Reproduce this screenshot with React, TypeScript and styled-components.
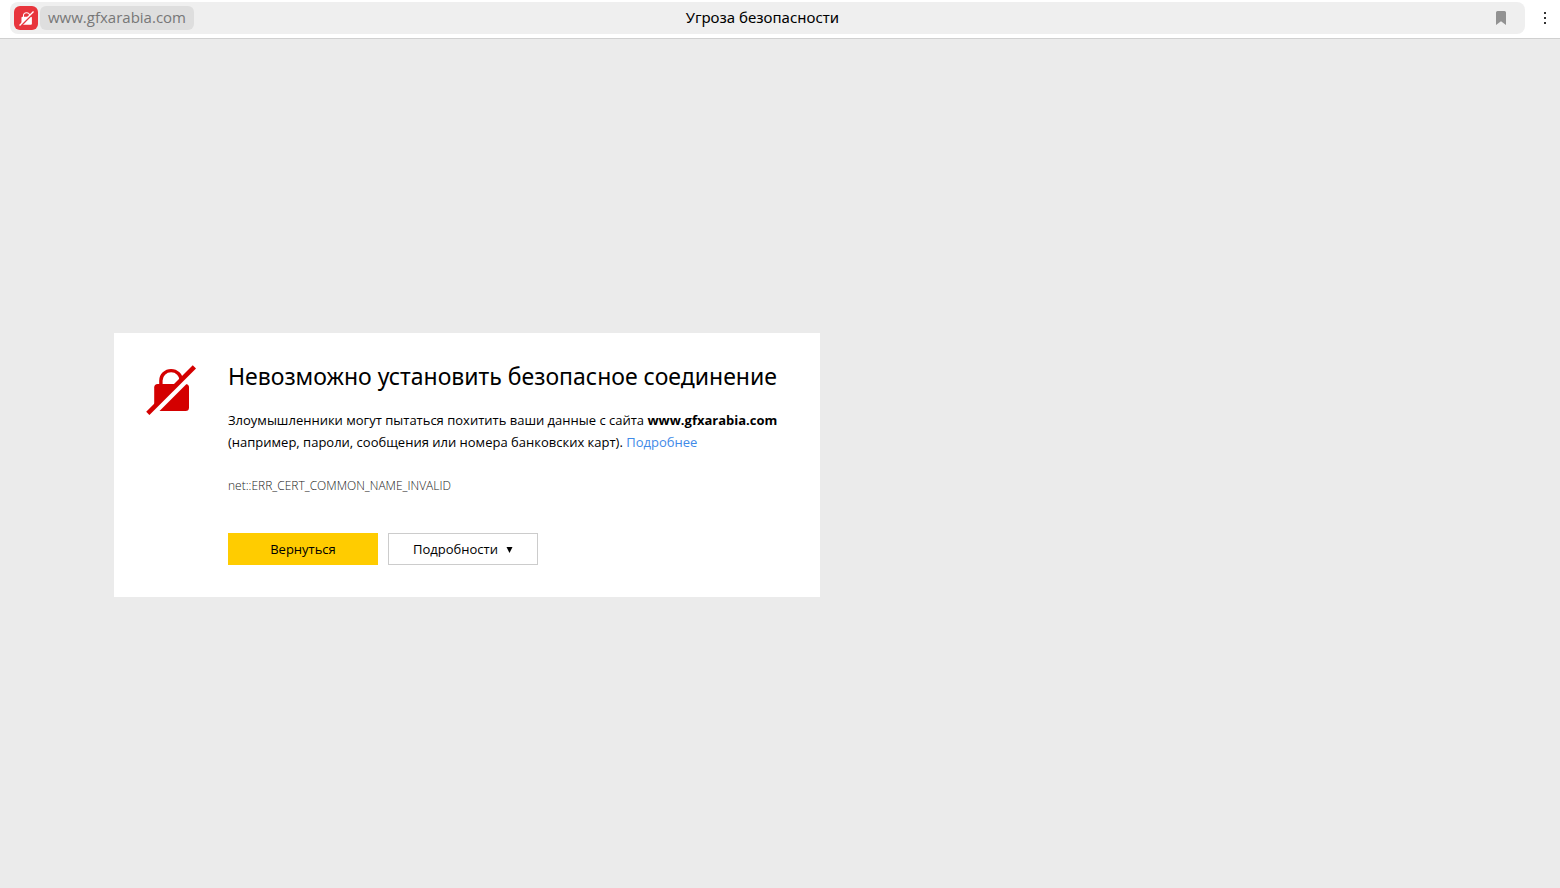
import React from "react";
import styled, { createGlobalStyle } from "styled-components";

const GlobalStyle = createGlobalStyle`
  * { box-sizing: border-box; }
  body {
    margin: 0;
    background: #ebebeb;
    color: #000;
    font-family: "Open Sans", "Noto Sans", sans-serif;
    font-size: 13px;
  }
  button { font: inherit; color: inherit; cursor: pointer; }
`;

const Page = styled.div`
  display: flex;
  flex-direction: column;
  min-height: 100vh;
`;

const Toolbar = styled.header`
  display: flex;
  height: 39px;
  padding: 2px 0 4px 10px;
  background: #fff;
  border-bottom: 1px solid #d0d0d0;
  font-size: 15px;
  line-height: 22px;
`;

const AddressBar = styled.div`
  flex: 1;
  display: grid;
  grid-template-columns: 1fr auto 1fr;
  align-items: center;
  height: 32px;
  padding: 0 14px 0 4px;
  background: #efefef;
  border-radius: 8px;
`;

const Site = styled.div`
  display: flex;
  align-items: center;
  gap: 2px;
`;

const IconButton = styled.button`
  display: flex;
  align-items: center;
  justify-content: center;
  padding: 0;
  border: 0;
  background: none;
`;

const SecurityButton = styled(IconButton)`
  width: 24px;
  height: 24px;
  border-radius: 6px;
  background: #e8353c;
  && { color: #fff; }
`;

const Host = styled.button`
  height: 24px;
  padding: 0 8px 2px;
  border: 0;
  border-radius: 6px;
  background: #dedede;
  && { color: #777; }
`;

const PageTitle = styled.div`
  padding-bottom: 2px;
  font-family: "Noto Sans", "Open Sans", sans-serif;
`;

const BookmarkButton = styled(IconButton)`
  justify-self: end;
  width: 20px;
  height: 24px;
`;

const MenuButton = styled(IconButton)`
  width: 35px;
  height: 32px;
  padding-left: 5px;
`;

const Main = styled.main`
  flex: 1;
  display: flex;
  align-items: center;
  padding: 3px 114px 0;
`;

const Card = styled.section`
  display: flex;
  align-items: flex-start;
  gap: 32px;
  width: 100%;
  max-width: 706px;
  padding: 32px;
  background: #fff;
`;

const LockBox = styled.div`
  flex: none;
  color: #d40000;
`;

const Content = styled.div`
  flex: 1;
`;

const Heading = styled.h1`
  margin: 0 0 22px;
  font-family: "Noto Sans", "Open Sans", sans-serif;
  font-size: 23px;
  font-weight: 400;
  line-height: 22px;
`;

const Text = styled.p`
  margin: 0;
  line-height: 22px;
`;

const MoreLink = styled.a`
  color: #3f8ae8;
  text-decoration: none;
`;

const ErrorCode = styled.p`
  margin: 22px 0 36px;
  color: #222;
  font-size: 12px;
  font-weight: 300;
  line-height: 22px;
`;

const Actions = styled.div`
  display: flex;
  gap: 10px;
`;

const ActionButton = styled.button<{ $primary?: boolean }>`
  display: flex;
  align-items: center;
  justify-content: center;
  gap: 8px;
  width: 150px;
  height: 32px;
  padding: 0;
  border: 1px solid ${(p) => (p.$primary ? "#fc0" : "#ccc")};
  background: ${(p) => (p.$primary ? "#fc0" : "#fff")};
`;

function BrokenLock({ size, id }: { size: number; id: string }) {
  return (
    <svg width={size} height={size} viewBox="0 1 50 50" fill="none" aria-hidden="true" display="block">
      <clipPath id={`${id}-upper`}>
        <path d="M0 0H51L0 51Z" />
      </clipPath>
      <clipPath id={`${id}-lower`}>
        <path d="M50 10.5V50H10.5Z" />
      </clipPath>
      <g clipPath={`url(#${id}-upper)`}>
        <path d="M14.9 22V16.6a10.2 10 0 0 1 20.4 0V22" stroke="currentColor" strokeWidth="3.4" />
        <rect x="8.2" y="20" width="34.8" height="27" rx="3.5" fill="currentColor" />
      </g>
      <g clipPath={`url(#${id}-lower)`}>
        <rect x="8.2" y="20" width="34.8" height="27" rx="3.5" fill="currentColor" />
      </g>
      <path d="M1.8 49.4L48.4 2.8" stroke="currentColor" strokeWidth="4.6" />
    </svg>
  );
}

export default function App() {
  return (
    <Page>
      <GlobalStyle />
      <Toolbar>
        <AddressBar>
          <Site>
            <SecurityButton aria-label="Соединение не защищено">
              <BrokenLock size={15} id="badge" />
            </SecurityButton>
            <Host>www.gfxarabia.com</Host>
          </Site>
          <PageTitle>Угроза безопасности</PageTitle>
          <BookmarkButton aria-label="Добавить в закладки">
            <svg width="10" height="14" viewBox="0 0 10 14" aria-hidden="true">
              <path d="M1.5 0h7Q10 0 10 1.5V14L5 10.3 0 14V1.5Q0 0 1.5 0Z" fill="#929292" />
            </svg>
          </BookmarkButton>
        </AddressBar>
        <MenuButton aria-label="Меню">
          <svg width="2" height="14" viewBox="0 0 2 14" fill="#333" aria-hidden="true">
            <rect y="1" width="2" height="2" />
            <rect y="6" width="2" height="2" />
            <rect y="11" width="2" height="2" />
          </svg>
        </MenuButton>
      </Toolbar>
      <Main>
        <Card>
          <LockBox>
            <BrokenLock size={50} id="card" />
          </LockBox>
          <Content>
            <Heading>Невозможно установить безопасное соединение</Heading>
            <Text>
              Злоумышленники могут пытаться похитить ваши данные с сайта <b>www.gfxarabia.com</b>{" "}
              (например, пароли, сообщения или номера банковских карт). <MoreLink href="#">Подробнее</MoreLink>
            </Text>
            <ErrorCode>net::ERR_CERT_COMMON_NAME_INVALID</ErrorCode>
            <Actions>
              <ActionButton $primary>Вернуться</ActionButton>
              <ActionButton>
                Подробности
                <svg width="7" height="8" viewBox="0 0 7 8" aria-hidden="true">
                  <path d="M0.5 2H6.5L3.5 8Z" fill="#000" />
                </svg>
              </ActionButton>
            </Actions>
          </Content>
        </Card>
      </Main>
    </Page>
  );
}
